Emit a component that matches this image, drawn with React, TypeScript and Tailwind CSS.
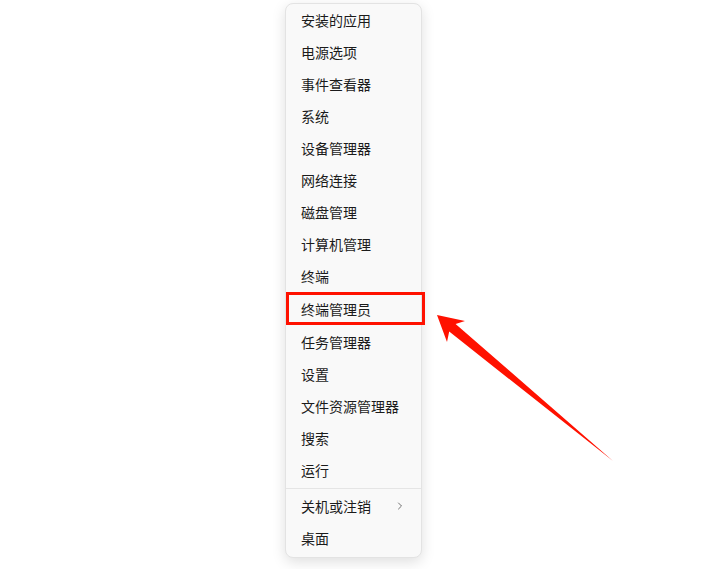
import { ChevronRight } from "lucide-react";

const items = [
  "安装的应用",
  "电源选项",
  "事件查看器",
  "系统",
  "设备管理器",
  "网络连接",
  "磁盘管理",
  "计算机管理",
  "终端",
  "终端管理员",
  "任务管理器",
  "设置",
  "文件资源管理器",
  "搜索",
  "运行",
];

function MenuItem({ label, chevron, tall }: { label: string; chevron?: boolean; tall?: boolean }) {
  return (
    <div
      className={`flex items-center justify-between pb-[2px] pl-[15px] pr-[15px] text-[14px] leading-none text-[#1b1b1b] ${
        tall ? "h-[34px]" : "h-8"
      }`}
    >
      <span>{label}</span>
      {chevron && <ChevronRight className="h-3 w-3 text-[#4f4f4f]" strokeWidth={1.6} />}
    </div>
  );
}

export default function App() {
  return (
    <div
      className="relative h-[569px] w-[718px] overflow-hidden bg-white pt-[3px]"
      style={{ fontFamily: '"Noto Sans CJK SC", "Noto Sans", sans-serif' }}
    >
      {/* context menu */}
      <div className="ml-[285px] w-[137px] rounded-[8px] border border-[#e3e3e3] bg-[#f9f9f9] pb-[2px] pt-[1px] shadow-[0_4px_14px_rgba(0,0,0,0.13)]">
        {items.map((label) => (
          <MenuItem key={label} label={label} tall={label === "终端管理员"} />
        ))}
        <div className="mb-[2px] mt-[1px] h-px bg-[#e5e5e5]" />
        <MenuItem label="关机或注销" chevron />
        <MenuItem label="桌面" />
      </div>

      {/* annotation: highlight box */}
      <div className="absolute left-[286px] top-[292px] h-[33px] w-[139px] border-[3px] border-[#ff1100]" />

      {/* annotation: arrow */}
      <svg className="pointer-events-none absolute left-0 top-0" width="718" height="569" viewBox="0 0 718 569">
        <polygon
          points="437,315 465,321 455.6,323.9 613,461 449.2,331.6 447,342"
          fill="#ff1100"
        />
      </svg>
    </div>
  );
}
